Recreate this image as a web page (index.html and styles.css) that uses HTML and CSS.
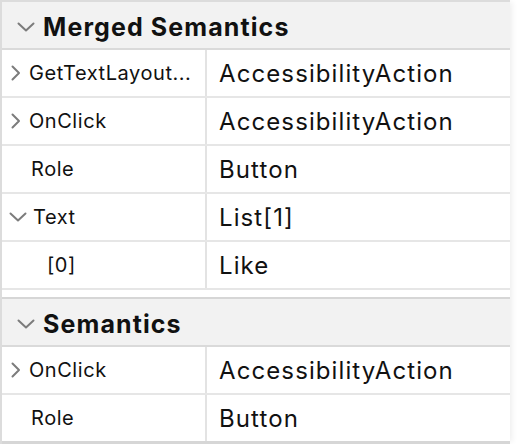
FILE: index.html
```html
<!DOCTYPE html>
<html lang="en">

<head>
    <meta charset="UTF-8">
    <meta name="viewport" content="width=device-width, initial-scale=1.0">
    <title>Semantics</title>
    <link rel="stylesheet" href="styles.css">
</head>

<body>
    <div class="panel">
        <div class="section">
            <div class="section-head">
                <svg class="chev-down" width="18" height="10" viewBox="0 0 18 10"><polyline points="1.5,1.5 9,8.5 16.5,1.5" /></svg>
                <span>Merged Semantics</span>
            </div>
            <div class="row">
                <div class="key">
                    <svg class="chev-right" width="10" height="16" viewBox="0 0 10 16"><polyline points="1.5,1.5 8,8 1.5,14.5" /></svg>
                    <span>GetTextLayout...</span>
                </div>
                <div class="val">AccessibilityAction</div>
            </div>
            <div class="row">
                <div class="key">
                    <svg class="chev-right" width="10" height="16" viewBox="0 0 10 16"><polyline points="1.5,1.5 8,8 1.5,14.5" /></svg>
                    <span>OnClick</span>
                </div>
                <div class="val">AccessibilityAction</div>
            </div>
            <div class="row">
                <div class="key plain"><span>Role</span></div>
                <div class="val">Button</div>
            </div>
            <div class="row">
                <div class="key open">
                    <svg class="chev-down small" width="18" height="10" viewBox="0 0 18 10"><polyline points="1.5,1.5 9,8.5 16.5,1.5" /></svg>
                    <span>Text</span>
                </div>
                <div class="val">List[1]</div>
            </div>
            <div class="row">
                <div class="key child"><span>[0]</span></div>
                <div class="val">Like</div>
            </div>
        </div>

        <div class="section second">
            <div class="section-head">
                <svg class="chev-down" width="18" height="10" viewBox="0 0 18 10"><polyline points="1.5,1.5 9,8.5 16.5,1.5" /></svg>
                <span>Semantics</span>
            </div>
            <div class="row">
                <div class="key">
                    <svg class="chev-right" width="10" height="16" viewBox="0 0 10 16"><polyline points="1.5,1.5 8,8 1.5,14.5" /></svg>
                    <span>OnClick</span>
                </div>
                <div class="val">AccessibilityAction</div>
            </div>
            <div class="row last">
                <div class="key plain"><span>Role</span></div>
                <div class="val">Button</div>
            </div>
        </div>
    </div>
</body>
</html>
```

FILE: styles.css
```css
body {
    margin: 0;
    padding: 0;
    background: #fff;
    font-family: 'Inter', 'Liberation Sans', sans-serif;
    color: #111;
}

.panel {
    width: 508px;
    border-left: 2px solid #dcdcdc;
    border-top: 2px solid #dcdcdc;
    box-shadow: 4px 0 6px -2px #eeeeee;
}

.section.second {
    margin-top: 7px;
    border-top: 2px solid #d6d6d6;
}

.section-head {
    display: flex;
    align-items: center;
    box-sizing: border-box;
    height: 48px;
    padding-top: 3px;
    background: #f2f2f2;
    border-bottom: 2px solid #dadada;
    font-size: 25px;
    font-weight: 700;
    letter-spacing: 1.1px;
}

.section-head .chev-down {
    margin-left: 15px;
    margin-right: 8px;
}

.chev-down polyline,
.chev-right polyline {
    fill: none;
    stroke: #7c7c7c;
    stroke-width: 2;
    stroke-linecap: round;
    stroke-linejoin: round;
}

.row {
    display: grid;
    grid-template-columns: 205px 1fr;
    height: 46px;
    border-bottom: 2px solid #e6e6e6;
}

.row.last {
    border-bottom: 3px solid #d6d6d6;
}

.key {
    display: flex;
    align-items: center;
    border-right: 2px solid #e3e3e3;
    font-size: 20px;
    letter-spacing: 0.55px;
    padding-left: 9px;
}

.key .chev-right {
    margin-right: 8px;
}

.key.plain {
    padding-left: 29px;
}

.key.open {
    padding-left: 7px;
}

.key.open .chev-down {
    margin-right: 6px;
}

.key.child {
    padding-left: 45px;
}

.val {
    display: flex;
    align-items: center;
    padding-left: 12px;
    font-size: 24px;
    letter-spacing: 1.1px;
}
```
